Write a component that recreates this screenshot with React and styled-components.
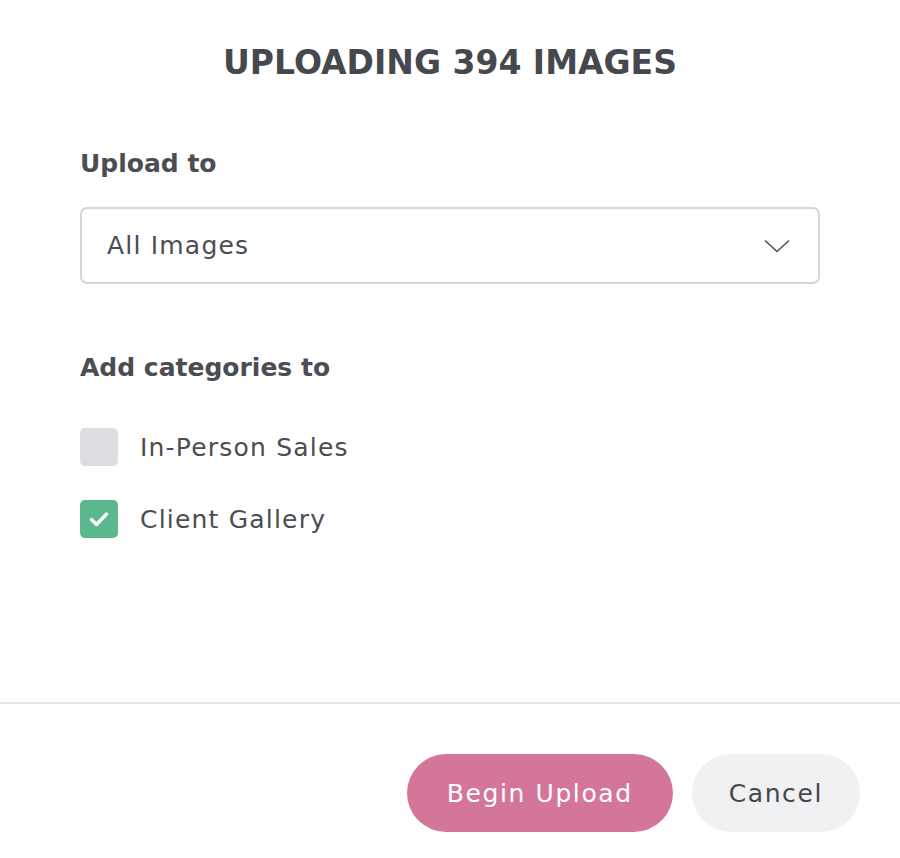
import React, { useState } from 'react';
import styled, { createGlobalStyle } from 'styled-components';

const Global = createGlobalStyle`
    html, body {
        margin: 0;
        padding: 0;
        background: #fff;
    }
    body {
        font-family: "DejaVu Sans", "Open Sans", sans-serif;
        color: #4a4d52;
    }
`;

const Modal = styled.div`
    width: 900px;
    height: 858px;
    display: flex;
    flex-direction: column;
    box-sizing: border-box;
`;

const Body = styled.div`
    flex: 1;
    padding: 40px 80px 0;
`;

const Title = styled.h1`
    margin: 0;
    text-align: center;
    font-size: 33px;
    font-weight: 700;
    line-height: 46px;
    color: #45484d;
`;

const Label = styled.div`
    font-size: 25px;
    font-weight: 600;
    line-height: 32px;
    margin-top: ${p => p.top}px;
`;

const Select = styled.div`
    margin-top: 27px;
    height: 77px;
    box-sizing: border-box;
    border: 2px solid #d4d5d7;
    border-radius: 7px;
    display: flex;
    align-items: center;
    justify-content: space-between;
    padding: 0 28px 0 25px;
    font-size: 25px;
    letter-spacing: 1.2px;
    color: #4a4d52;
`;

const List = styled.div`
    margin-top: 44px;
    display: flex;
    flex-direction: column;
    gap: 34px;
`;

const Row = styled.label`
    display: flex;
    align-items: center;
    gap: 22px;
    font-size: 25px;
    letter-spacing: 1.2px;
    cursor: pointer;
`;

const Box = styled.span`
    width: 38px;
    height: 38px;
    border-radius: 5px;
    background: ${p => (p.checked ? '#5bb88c' : '#dcdde0')};
    display: flex;
    align-items: center;
    justify-content: center;
    flex-shrink: 0;
`;

const Footer = styled.div`
    border-top: 2px solid #e6e6e7;
    display: flex;
    justify-content: flex-end;
    gap: 19px;
    padding: 50px 40px 26px;
`;

const Button = styled.button`
    height: 78px;
    border: none;
    border-radius: 39px;
    padding: 0 ${p => (p.primary ? 40 : 37)}px 0 ${p => (p.primary ? 40 : 37)}px;
    font-family: inherit;
    font-size: 25px;
    letter-spacing: 1.6px;
    background: ${p => (p.primary ? '#d4769a' : '#f0f1f2')};
    color: ${p => (p.primary ? '#fff' : '#45484d')};
    cursor: pointer;
`;

const categories = [
    { name: 'In-Person Sales', checked: false },
    { name: 'Client Gallery', checked: true },
];

export default function App() {
    const [cats, setCats] = useState(categories);

    const toggle = i =>
        setCats(cats.map((c, j) => (j === i ? { ...c, checked: !c.checked } : c)));

    return (
        <Modal>
            <Global />
            <Body>
                <Title>UPLOADING 394 IMAGES</Title>
                <Label top={62}>Upload to</Label>
                <Select>
                    All Images
                    <svg width="26" height="14" viewBox="0 0 26 14" fill="none">
                        <path d="M1 1.5l12 11 12-11" stroke="#4a4d52" strokeWidth="1.5" />
                    </svg>
                </Select>
                <Label top={68}>Add categories to</Label>
                <List>
                    {cats.map((c, i) => (
                        <Row key={c.name} onClick={() => toggle(i)}>
                            <Box checked={c.checked}>
                                {c.checked && (
                                    <svg width="20" height="16" viewBox="0 0 20 16" fill="none">
                                        <path d="M2.5 8.5l5 5L17.5 3" stroke="#fff" strokeWidth="3.4" strokeLinecap="round" strokeLinejoin="round" />
                                    </svg>
                                )}
                            </Box>
                            {c.name}
                        </Row>
                    ))}
                </List>
            </Body>
            <Footer>
                <Button primary>Begin Upload</Button>
                <Button>Cancel</Button>
            </Footer>
        </Modal>
    );
}
